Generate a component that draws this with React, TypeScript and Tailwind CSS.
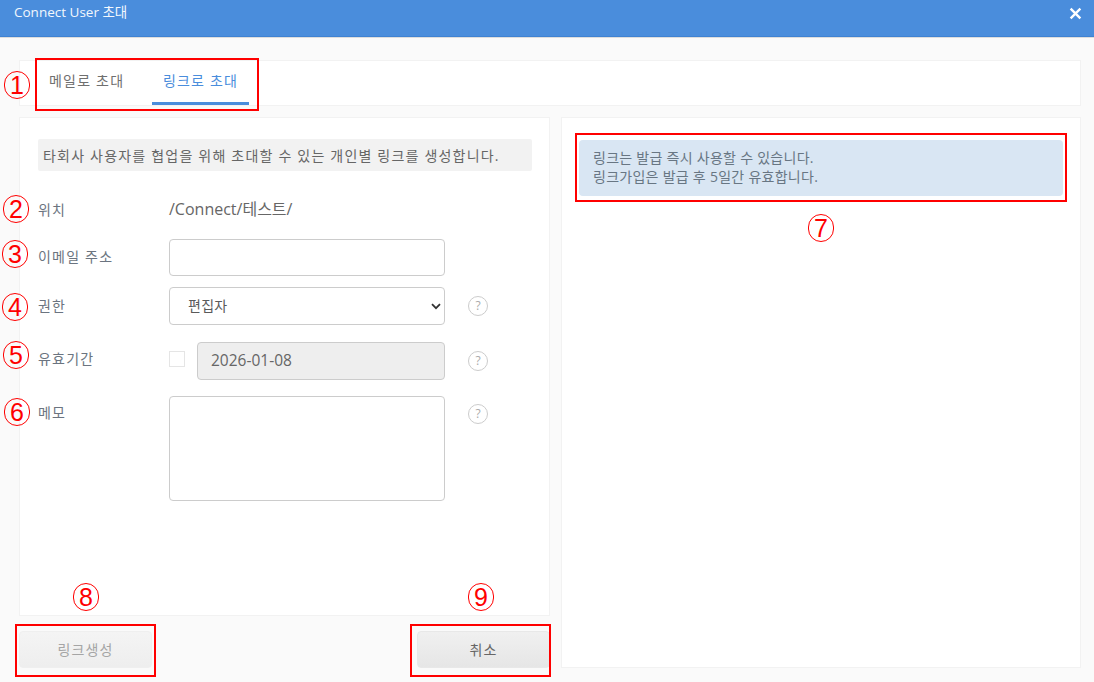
import React from "react";

const font = "font-['Open_Sans','Noto_Sans_CJK_KR',sans-serif]";

function Help() {
  return (
    <div className="ml-[23px] flex h-[20px] w-[20px] shrink-0 items-center justify-center rounded-full border border-[#cccccc] bg-white text-[12px] leading-none text-[#aaaaaa]">
      ?
    </div>
  );
}

function Num({ n, className }: { n: string; className: string }) {
  return (
    <div
      className={`absolute flex h-[28px] w-[26px] items-center justify-center rounded-full border-[1.75px] border-[#ff0000] text-[25px] leading-none text-[#ff0000] font-['Liberation_Sans',sans-serif] ${className}`}
    >
      {n}
    </div>
  );
}

function Label({ children, className = "" }: { children: React.ReactNode; className?: string }) {
  return <div className={`w-[131px] shrink-0 text-[14px] tracking-[1.2px] text-[#6b7480] ${className}`}>{children}</div>;
}

export default function App() {
  return (
    <div className={`relative flex h-[682px] w-[1094px] flex-col overflow-hidden bg-[#fafafa] ${font}`}>
      <header className="flex h-[37px] shrink-0 items-start justify-between border-b border-[#3f82d2] bg-[#4a8ddc] pl-[14px] pr-[12px] shadow-[0_1px_0_#dddddd]">
        <span className="mt-[2px] text-[13.5px] leading-[20px] text-[#f2f7fd]">Connect User 초대</span>
        <svg className="mt-[7px]" width="13" height="13" viewBox="0 0 12 12">
          <path d="M1.5 1.5 L10.5 10.5 M10.5 1.5 L1.5 10.5" stroke="#ffffff" strokeWidth="2.2" />
        </svg>
      </header>

      <div className="ml-[19px] mr-[13px] mt-[23px] flex h-[46px] shrink-0 items-stretch border border-[#f2f2f2] bg-white pl-[18px]">
        <div className="flex w-[114px] items-center pb-[6px] pl-[11px] text-[14px] tracking-[1.2px] text-[#6f6f6f]">메일로 초대</div>
        <div className="flex w-[97px] items-center justify-center border-b-[3px] border-[#4a8ddc] pb-[3px] text-[14px] tracking-[1.2px] text-[#4a8ddc]">
          링크로 초대
        </div>
      </div>

      <div className="ml-[19px] mr-[13px] mt-[11px] flex min-h-0 flex-1 gap-[11px] pb-[14px]">
        <div className="flex w-[531px] shrink-0 flex-col">
          <div className="h-[499px] border border-[#f2f2f2] bg-white pl-[18px] pr-[17px] pt-[21px]">
            <div className="flex h-[32px] items-center rounded-[2px] bg-[#f2f2f2] pl-[5px] text-[14px] tracking-[1.2px] text-[#666666]">
              타회사 사용자를 협업을 위해 초대할 수 있는 개인별 링크를 생성합니다.
            </div>

            <div className="mt-[26px] flex h-[24px] items-center">
              <Label>위치</Label>
              <span className="text-[16px] text-[#666666]">/Connect/테스트/</span>
            </div>

            <div className="mt-[18px] flex h-[37px] items-center">
              <Label className="-mt-[2px]">이메일 주소</Label>
              <input className="h-[37px] w-[276px] rounded-[4px] border border-[#cccccc] bg-white" />
            </div>

            <div className="mt-[11px] flex h-[38px] items-center">
              <Label className="-mt-[2px]">권한</Label>
              <div className="flex h-[38px] w-[276px] items-center justify-between rounded-[4px] border border-[#cccccc] bg-white pl-[18px] pr-[3px] text-[14px] tracking-[0.3px] text-[#5a5a5a]">
                <span className="-mt-[2px]">편집자</span>
                <svg width="10" height="7" viewBox="0 0 10 7">
                  <path d="M1 1.2 L5 5.2 L9 1.2" fill="none" stroke="#333333" strokeWidth="1.8" />
                </svg>
              </div>
              <Help />
            </div>

            <div className="mt-[17px] flex h-[38px] items-center">
              <Label className="-mt-[6px]">유효기간</Label>
              <div className="-mt-[4px] mr-[12px] h-[16px] w-[16px] shrink-0 border border-[#e5e5e5] bg-white" />
              <div className="flex h-[38px] w-[248px] items-center rounded-[4px] border border-[#cccccc] bg-[#eeeeee] pl-[13px] text-[15.5px] text-[#666666]">
                2026-01-08
              </div>
              <Help />
            </div>

            <div className="mt-[16px] flex h-[105px] items-start">
              <Label className="mt-[6px]">메모</Label>
              <div className="h-[105px] w-[276px] rounded-[4px] border border-[#cccccc] bg-white" />
              <div className="mt-[8px]">
                <Help />
              </div>
            </div>
          </div>

          <div className="mt-[15px] flex justify-between">
            <button className="h-[37px] w-[133px] rounded-[4px] border border-[#efefef] bg-linear-to-b from-[#f4f4f4] to-[#eeeeee] text-[14px] tracking-[1.1px] text-[#a5a5a5]">링크생성</button>
            <button className="h-[37px] w-[133px] rounded-[4px] border border-[#e8e8e8] bg-linear-to-b from-[#f0f0f0] to-[#e6e6e6] text-[14px] tracking-[1.1px] text-[#666666]">취소</button>
          </div>
        </div>

        <div className="flex-1 border border-[#f2f2f2] bg-white pl-[17px] pr-[17px] pt-[22px]">
          <div className="h-[56px] rounded-[4px] bg-[#d9e6f3] pl-[14px] pt-[8px] text-[14px] leading-[19px] tracking-[0.27px] text-[#687683]">
            <div>링크는 발급 즉시 사용할 수 있습니다.</div>
            <div>링크가입은 발급 후 5일간 유효합니다.</div>
          </div>
        </div>
      </div>

      <div className="absolute left-[35px] top-[58px] h-[53px] w-[224px] border-2 border-[#ff0000]" />
      <div className="absolute left-[575px] top-[133px] h-[69px] w-[492px] border-2 border-[#ff0000]" />
      <div className="absolute left-[15px] top-[624px] h-[53px] w-[141px] border-2 border-[#ff0000]" />
      <div className="absolute left-[410px] top-[624px] h-[53px] w-[141px] border-2 border-[#ff0000]" />

      <Num n="1" className="left-[4px] top-[71px]" />
      <Num n="2" className="left-[3px] top-[195px]" />
      <Num n="3" className="left-[2px] top-[240px]" />
      <Num n="4" className="left-[2px] top-[293px]" />
      <Num n="5" className="left-[3px] top-[341px]" />
      <Num n="6" className="left-[4px] top-[398px]" />
      <Num n="7" className="left-[808px] top-[214px]" />
      <Num n="8" className="left-[73px] top-[583px]" />
      <Num n="9" className="left-[468px] top-[583px]" />
    </div>
  );
}
